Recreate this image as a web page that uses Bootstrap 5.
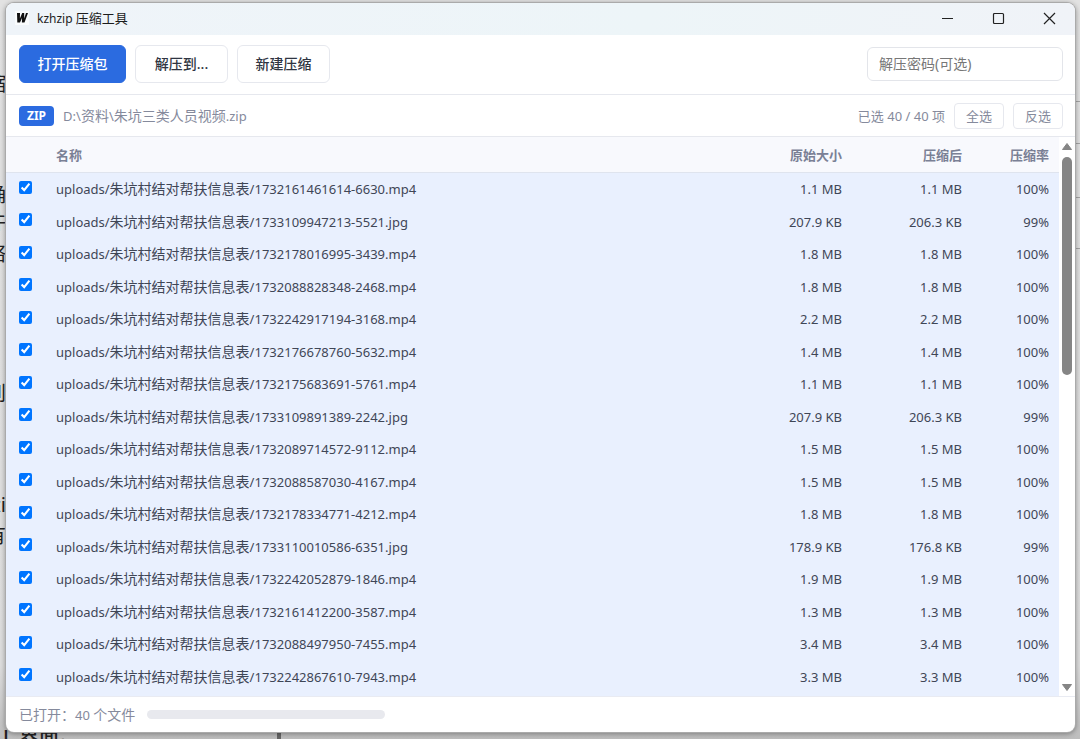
<!DOCTYPE html>
<html lang="zh-CN">
<head>
<meta charset="utf-8">
<meta name="viewport" content="width=device-width, initial-scale=1">
<title>kzhzip 压缩工具</title>
<link href="https://cdn.jsdelivr.net/npm/bootstrap@5.3.0/dist/css/bootstrap.min.css" rel="stylesheet">
<style>
:root{--ui:"Noto Sans","Noto Sans CJK SC",sans-serif;--blue:#2b6be0;--line:#e6e8ee;--muted:#858a9c}
body{font-family:var(--ui);font-size:13px;line-height:20px;color:#3f4656;background:linear-gradient(#e2e2e2,#dedede 90%,#bdbdbd);overflow:hidden}
.zh{font-size:14px}
/* desktop behind the window */
.desk{position:absolute;inset:0;overflow:hidden;font-size:20px;line-height:28px;color:#222}
.desk span{position:absolute;white-space:nowrap}
.desk .side{right:100%;margin-right:-6px}
.desk .low{left:3px;bottom:-12px;font-weight:500}
.desk i{position:absolute;background:#a5a5a5;right:0;width:5px;height:1px}
.desk .post{right:auto;left:277px;bottom:0;width:4px;height:8px;background:#666}
.stage{position:relative;height:100vh;padding:3px 5px 7px 6px}
.win{background:#fff;border-radius:8px;overflow:hidden;box-shadow:0 0 0 1px #aaa,0 1px 5px 1px rgba(0,0,0,.35)}
.titlebar{height:32px;background:linear-gradient(90deg,#eff4f9,#edf5f8 60%,#f0f3f8);padding:0 18px 2px 9px;font-size:12px;color:#1c1c1c}
.titlebar .name{font-size:13px}
.logo{width:14px;height:14px}
.caps{gap:36px}
.caps button{width:15px;height:15px;border:0;padding:0;background:none;line-height:0}
.toolbar{height:60px;padding:0 12px 2px 13px;gap:9px;border-bottom:1px solid var(--line)}
.tbtn{font-size:14px;height:38px;min-width:93px;padding:0 17px;border-radius:6px;border:1px solid var(--line);background:#fff;color:#2f3542;font-weight:500}
.tbtn.main{min-width:107px;background:var(--blue);border-color:var(--blue);color:#fff}
.pw{width:196px;height:34px;border-radius:6px;border-color:#e3e5ea;font-size:14px;padding:0 11px}
.pw::placeholder{color:#777}
.info{height:42px;padding:0 12px 0 13px;gap:9px;border-bottom:1px solid var(--line);color:var(--muted)}
.zip{background:var(--blue);font-size:12px;line-height:20px;padding:0 8px;border-radius:4px;font-weight:700}
.sbtn{font-size:13px;height:26px;padding:0 11px;border-radius:4px;border:1px solid var(--line);background:#fff;color:var(--muted)}
.files{table-layout:fixed;border-collapse:separate;border-spacing:0}
.files th{height:36px;padding:0;background:#f8f9fd;border-bottom:1px solid #dfe4ee;color:#7a8095;font-size:13px;font-weight:700}
.files td{height:32px;padding:0;background:#e9f0fe;white-space:nowrap}
.files tr:nth-child(even) td{height:33px}
.files .r{text-align:right;width:120px}
.files .rate{width:97px;padding-right:10px}
.files .c0{width:50px;padding-left:13px;line-height:0}
.files .c0 input{display:block;width:13px;height:13px;margin:0 0 4px}
.scroll{width:16px;padding:5px 0 4px}
.thumb{width:10px;height:218px;border-radius:5px;background:#858585;margin-top:6px}
.foot{height:36px;padding:0 13px;gap:12px;border-top:1px solid #e9ebf2;color:var(--muted)}
.bar{width:238px;height:9px;border-radius:5px;background:#e8e9ee}
</style>
</head>
<body>
<div class="desk" aria-hidden="true">
<span class="side" style="top:70px">缩</span><span class="side" style="top:181px">确</span><span class="side" style="top:208px">件</span><span class="side" style="top:240px">络</span><span class="side" style="top:380px">到</span><span class="side" style="top:491px">zi</span><span class="side" style="top:522px">有</span>
<span class="low">L 界面。</span>
<i style="top:101px"></i><i style="top:143px"></i><i style="top:197px"></i><i style="top:248px"></i><i class="post"></i>
</div>
<div class="stage">
<main class="win d-flex flex-column h-100">
<header class="titlebar d-flex align-items-center flex-shrink-0">
<svg class="logo me-2" viewBox="0 0 14 14" aria-hidden="true"><rect width="14" height="14" fill="#fafcfd"/><path d="M2 2h3l-.1 5.500L7.200 2h2v5.500L11 2h2L9.500 11.500H6.900l.1-4.500L5 11.500H2.300z" fill="#111"/></svg>
<span>kzhzip <span class="name">压缩工具</span></span>
<div class="caps d-flex ms-auto">
<button type="button" aria-label="最小化"><svg width="15" height="15" fill="none" stroke="#222"><path d="M2 7.500h11"/></svg></button>
<button type="button" aria-label="最大化"><svg width="15" height="15" fill="none" stroke="#222" stroke-width="1.200"><rect x="2.500" y="2.500" width="10" height="10" rx="1"/></svg></button>
<button type="button" aria-label="关闭"><svg width="15" height="15" fill="none" stroke="#222" stroke-width="1.200"><path d="M2 2l11 11M13 2L2 13"/></svg></button>
</div>
</header>
<section class="toolbar d-flex align-items-center flex-shrink-0">
<button class="tbtn main" type="button">打开压缩包</button>
<button class="tbtn" type="button">解压到...</button>
<button class="tbtn" type="button">新建压缩</button>
<input class="pw form-control ms-auto" type="password" placeholder="解压密码(可选)" aria-label="解压密码">
</section>
<section class="info d-flex align-items-center flex-shrink-0">
<span class="badge zip">ZIP</span>
<span>D:\<span class="zh">资料</span>\<span class="zh">朱坑三类人员视频</span>.zip</span>
<span class="ms-auto">已选 40 / 40 项</span>
<button class="sbtn" type="button">全选</button>
<button class="sbtn" type="button">反选</button>
</section>
<section class="d-flex flex-grow-1 overflow-hidden">
<div class="flex-grow-1 overflow-hidden">
<table class="files w-100">
<thead><tr><th class="c0"></th><th>名称</th><th class="r">原始大小</th><th class="r">压缩后</th><th class="r rate">压缩率</th></tr></thead>
<tbody id="rows"></tbody>
</table>
</div>
<div class="scroll d-flex flex-column align-items-center flex-shrink-0">
<svg width="12" height="9"><path d="M6 1.500L10.500 7.500h-9z" fill="#858585" stroke="#858585" stroke-linejoin="round"/></svg>
<div class="thumb"></div>
<svg class="mt-auto" width="12" height="9"><path d="M1.500 1.500h9L6 7.500z" fill="#858585" stroke="#858585" stroke-linejoin="round"/></svg>
</div>
</section>
<footer class="foot d-flex align-items-center flex-shrink-0"><span><span class="zh">已打开：</span>40 <span class="zh">个文件</span></span><div class="bar"></div></footer>
</main>
</div>
<script src="https://cdn.jsdelivr.net/npm/bootstrap@5.3.0/dist/js/bootstrap.bundle.min.js"></script>
<script>
const files=[
["1732161461614-6630.mp4","1.1 MB","1.1 MB",100],["1733109947213-5521.jpg","207.9 KB","206.3 KB",99],
["1732178016995-3439.mp4","1.8 MB","1.8 MB",100],["1732088828348-2468.mp4","1.8 MB","1.8 MB",100],
["1732242917194-3168.mp4","2.2 MB","2.2 MB",100],["1732176678760-5632.mp4","1.4 MB","1.4 MB",100],
["1732175683691-5761.mp4","1.1 MB","1.1 MB",100],["1733109891389-2242.jpg","207.9 KB","206.3 KB",99],
["1732089714572-9112.mp4","1.5 MB","1.5 MB",100],["1732088587030-4167.mp4","1.5 MB","1.5 MB",100],
["1732178334771-4212.mp4","1.8 MB","1.8 MB",100],["1733110010586-6351.jpg","178.9 KB","176.8 KB",99],
["1732242052879-1846.mp4","1.9 MB","1.9 MB",100],["1732161412200-3587.mp4","1.3 MB","1.3 MB",100],
["1732088497950-7455.mp4","3.4 MB","3.4 MB",100],["1732242867610-7943.mp4","3.3 MB","3.3 MB",100]];
document.getElementById("rows").innerHTML=files.map((f,i)=>`<tr><td class="c0"><input type="checkbox" id="f${i}" checked></td><td><label for="f${i}">uploads/<span class="zh">朱坑村结对帮扶信息表</span>/${f[0]}</label></td><td class="r">${f[1]}</td><td class="r">${f[2]}</td><td class="r rate">${f[3]}%</td></tr>`).join("")+'<tr><td colspan="5"></td></tr>';
</script>
</body>
</html>
